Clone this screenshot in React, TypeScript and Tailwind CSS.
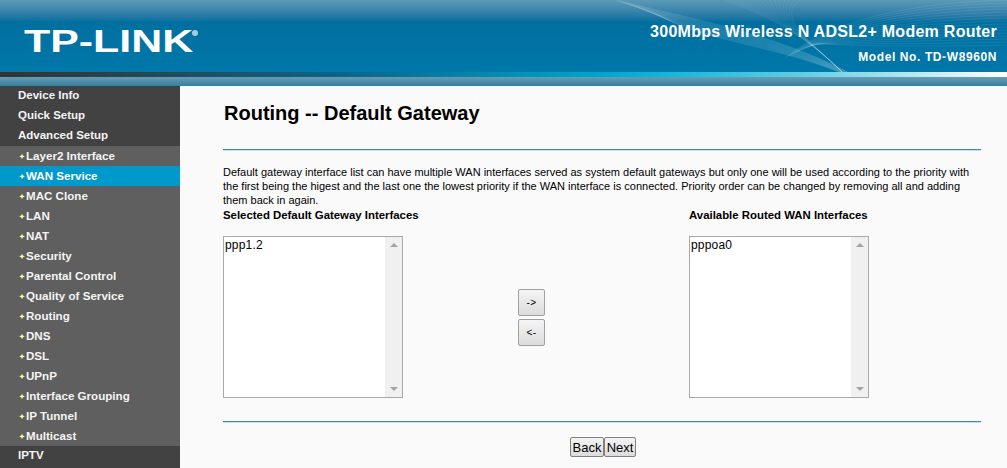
const font = { fontFamily: '"Liberation Sans", Arial, sans-serif' }

const subItems = [
  "Layer2 Interface",
  "WAN Service",
  "MAC Clone",
  "LAN",
  "NAT",
  "Security",
  "Parental Control",
  "Quality of Service",
  "Routing",
  "DNS",
  "DSL",
  "UPnP",
  "Interface Grouping",
  "IP Tunnel",
  "Multicast",
]

const fan = Array.from({ length: 16 }, (_, i) => i)

function HeaderWaves() {
  return (
    <svg className="absolute inset-0" width="1007" height="72" fill="none" stroke="#ffffff">
      {fan.map((i) => (
        <path
          key={"a" + i}
          d={`M${615 + i * 3} ${i} C690 ${18 + i * 1.3}, 775 ${34 + i * 0.8}, ${848 - i * 0.6} 72`}
          strokeOpacity={0.16}
          strokeWidth={0.6}
        />
      ))}
      {fan.map((i) => (
        <path
          key={"b" + i}
          d={`M${1007} ${i * 3} C925 ${i * 3 + 2}, 835 ${16 + i * 2}, ${785 + i * 2} ${58 - i}`}
          strokeOpacity={0.14}
          strokeWidth={0.6}
        />
      ))}
      {fan.map((i) => (
        <path
          key={"c" + i}
          d={`M${725 + i * 5} 0 C775 18, 812 42, 842 72`}
          strokeOpacity={0.1}
          strokeWidth={0.6}
        />
      ))}
    </svg>
  )
}

function TopItem({ label }: { label: string }) {
  return <div className="h-5 bg-[#424242] pl-[18px] text-[11.5px] leading-[19px] font-bold text-[#f4f4f4]">{label}</div>
}

function SubItem({ label }: { label: string }) {
  const active = label === "WAN Service"
  return (
    <div
      className={
        active
          ? "flex h-5 items-center bg-[#0099cc] pl-[19px] text-[11.6px] font-bold text-white"
          : "flex h-5 items-center bg-[#5f5f5f] pl-[19px] text-[11.6px] font-bold text-[#f4f4f4]"
      }
    >
      <span className="inline-block w-[7px] text-[7px] leading-none text-[#ffff99]">✦</span>
      {label}
    </div>
  )
}

function ListBox({ value }: { value: string }) {
  return (
    <div className="flex h-[162px] w-[180px] border border-[#a9a9a9] bg-white">
      <div className="flex-1 pl-px pt-px text-[12px] leading-[14px] tracking-[0.2px] text-black">{value}</div>
      <div className="flex w-[17px] flex-col items-center justify-between bg-[#f0f0f0] py-[6px]">
        <div className="h-0 w-0 border-x-[4px] border-b-[4px] border-x-transparent border-b-[#a3a3a3]" />
        <div className="h-0 w-0 border-x-[4px] border-t-[4px] border-x-transparent border-t-[#a3a3a3]" />
      </div>
    </div>
  )
}

function SmallButton({ label }: { label: string }) {
  return (
    <button className="h-[27px] w-[27px] rounded-[2px] border border-[#a0a0a0] bg-gradient-to-b from-[#f4f4f4] to-[#dcdcdc] text-[10px] tracking-[0.5px] text-black">
      {label}
    </button>
  )
}

function Divider() {
  return <div className="h-[2px] border-t border-[#4a8db0] bg-[#c9dde8]" />
}

export default function App() {
  return (
    <div className="flex h-[468px] w-[1007px] flex-col overflow-hidden bg-[#fafafa]" style={font}>
      <header className="relative h-[72px] bg-gradient-to-b from-[#5b9ab6] via-[#006f9f] via-30% to-[#0078aa]">
        <HeaderWaves />
        <div className="relative flex h-full items-start justify-between">
          <div className="relative ml-[24px] mt-[24px] origin-left scale-x-[1.384] text-[31px] leading-[36px] font-bold text-white">
            TP-LINK
          </div>
          <span className="absolute left-[192px] top-[30px] h-[6px] w-[6px] rounded-full bg-[#a8cadb]" />
          <div className="mr-[10px] mt-[23px] text-right font-bold text-white">
            <div className="text-[16px] leading-[18px] tracking-[0.27px]">300Mbps Wireless N ADSL2+ Modem Router</div>
            <div className="mt-[9px] text-[12px] leading-[14px] tracking-[0.6px]">Model No. TD-W8960N</div>
          </div>
        </div>
      </header>
      <div className="h-[5px] bg-[linear-gradient(to_right,#333333_0%,#0c6488_34%,#00a6cf_60%,#12b5dc_66%,#62cfe5_80%,#ffffff_100%)]" />
      <div className="h-[9px] bg-gradient-to-b from-[#6a9bb3] to-[#337f9f]" />

      <div className="flex min-h-0 flex-1">
        <nav className="w-[180px] shrink-0 bg-[#424242]">
          <TopItem label="Device Info" />
          <TopItem label="Quick Setup" />
          <TopItem label="Advanced Setup" />
          {subItems.map((item) => (
            <SubItem key={item} label={item} />
          ))}
          <TopItem label="IPTV" />
        </nav>

        <main className="box-content w-[758px] pl-[43px] text-black">
          <h1 className="mt-[16px] h-[24px] pl-px text-[20px] leading-[22px] font-bold">Routing -- Default Gateway</h1>
          <div className="mt-[23px]">
            <Divider />
          </div>
          <p className="mt-[14px] text-[11px] leading-[14px]">
            Default gateway interface list can have multiple WAN interfaces served as system default gateways but only one will be used according to the priority with the first being the higest and the last one the lowest priority if the WAN interface is connected. Priority order can be changed by removing all and adding them back in again.
          </p>
          <div className="mt-[1px] grid grid-cols-[295px_171px_1fr] text-[11.4px] font-bold leading-[14px]">
            <div>Selected Default Gateway Interfaces</div>
            <div />
            <div>Available Routed WAN Interfaces</div>
          </div>
          <div className="mt-[14px] flex">
            <ListBox value="ppp1.2" />
            <div className="ml-[115px] mr-[144px] flex flex-col gap-[3px] pt-[53px]">
              <SmallButton label="->" />
              <SmallButton label="<-" />
            </div>
            <ListBox value="pppoa0" />
          </div>
          <div className="mt-[23px]">
            <Divider />
          </div>
          <div className="mt-[14px] flex pl-[347px]">
            <button className="h-5 w-[34px] rounded-[2px] border border-[#808080] bg-gradient-to-b from-[#f4f4f4] to-[#dcdcdc] text-[13px] leading-none">
              Back
            </button>
            <button className="h-5 w-[32px] rounded-[2px] border border-[#808080] bg-gradient-to-b from-[#f4f4f4] to-[#dcdcdc] text-[13px] leading-none">
              Next
            </button>
          </div>
        </main>
      </div>
    </div>
  )
}
